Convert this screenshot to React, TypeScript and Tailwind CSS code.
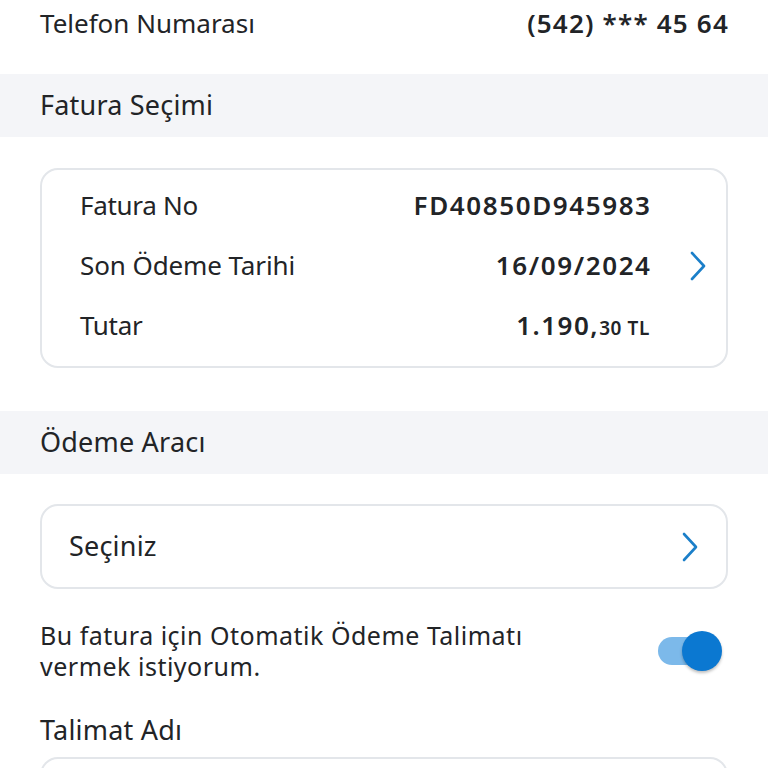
import React from "react";

const Chevron = ({ className }: { className?: string }) => (
  <svg viewBox="0 0 20 32" className={className} fill="none" stroke="currentColor" strokeWidth={2.6} strokeLinecap="round" strokeLinejoin="round">
    <path d="M4 3 L16 16 L4 29" />
  </svg>
);

export default function App() {
  return (
    <div className="w-[768px] h-[768px] overflow-hidden bg-white text-[#222427]" style={{ fontFamily: '"Noto Sans", sans-serif' }}>
      <div className="h-[46px] flex items-center justify-between px-[40px]">
        <span className="text-[26px] tracking-[0px]">Telefon Numarası</span>
        <span className="text-[26px] font-semibold tracking-[1.2px] mr-[-1px]">(542) *** 45 64</span>
      </div>
      <div className="h-[28px]" />
      <div className="h-[63px] bg-[#f4f5f8] flex items-center px-[40px]">
        <span className="text-[27px] tracking-[0.2px]">Fatura Seçimi</span>
      </div>
      <div className="px-[40px] pt-[31px]">
        <div className="h-[200px] rounded-[18px] border-2 border-[#e3e6ea] flex items-center pl-[38px] pr-[18px] pb-[5px]">
          <div className="flex-1 flex flex-col gap-[22px]">
            <div className="flex justify-between items-center h-[38px]">
              <span className="text-[26px] tracking-[-0.3px]">Fatura No</span>
              <span className="text-[26px] font-semibold tracking-[1.6px] mr-[-1.6px]">FD40850D945983</span>
            </div>
            <div className="flex justify-between items-center h-[38px]">
              <span className="text-[26px] tracking-[-0.1px]">Son Ödeme Tarihi</span>
              <span className="text-[26px] font-semibold tracking-[1.6px] mr-[-1.6px]">16/09/2024</span>
            </div>
            <div className="flex justify-between items-center h-[38px]">
              <span className="text-[26px] tracking-[-0.3px]">Tutar</span>
              <span className="font-semibold">
                <span className="text-[26px] tracking-[1.5px]">1.190,</span>
                <span className="text-[19px] tracking-[0.6px]">30 TL</span>
              </span>
            </div>
          </div>
          <div className="w-[58px] flex justify-end">
            <Chevron className="w-[20px] h-[32px] text-[#1b7fc9]" />
          </div>
        </div>
      </div>
      <div className="h-[43px]" />
      <div className="h-[63px] bg-[#f4f5f8] flex items-center px-[40px]">
        <span className="text-[27px] tracking-[0.2px]">Ödeme Aracı</span>
      </div>
      <div className="px-[40px] pt-[30px]">
        <div className="h-[85px] rounded-[18px] border-2 border-[#e3e6ea] flex items-center justify-between pl-[27px] pr-[26px]">
          <span className="text-[27px] tracking-[0.2px]">Seçiniz</span>
          <Chevron className="w-[20px] h-[32px] text-[#1b7fc9]" />
        </div>
      </div>
      <div className="px-[40px] pt-[31px] flex items-center justify-between">
        <div className="text-[25px] tracking-[0.5px]">
          <div className="leading-[31px]">Bu fatura için Otomatik Ödeme Talimatı</div>
          <div className="leading-[31px]">vermek istiyorum.</div>
        </div>
        <div className="relative w-[64px] h-[40px] mr-[6px] flex items-center">
          <div className="absolute left-[0px] w-[50px] h-[28px] rounded-full bg-[#7cb9ea]" />
          <div className="absolute right-[0px] w-[40px] h-[40px] rounded-full bg-[#0b78d1] shadow-[0_2px_3px_rgba(0,0,0,0.25)]" />
        </div>
      </div>
      <div className="px-[40px] pt-[28px]">
        <span className="text-[27px] tracking-[0.2px]">Talimat Adı</span>
      </div>
      <div className="px-[40px] pt-[6px]">
        <div className="h-[60px] rounded-[18px] border-2 border-[#e3e6ea]" />
      </div>
    </div>
  );
}
